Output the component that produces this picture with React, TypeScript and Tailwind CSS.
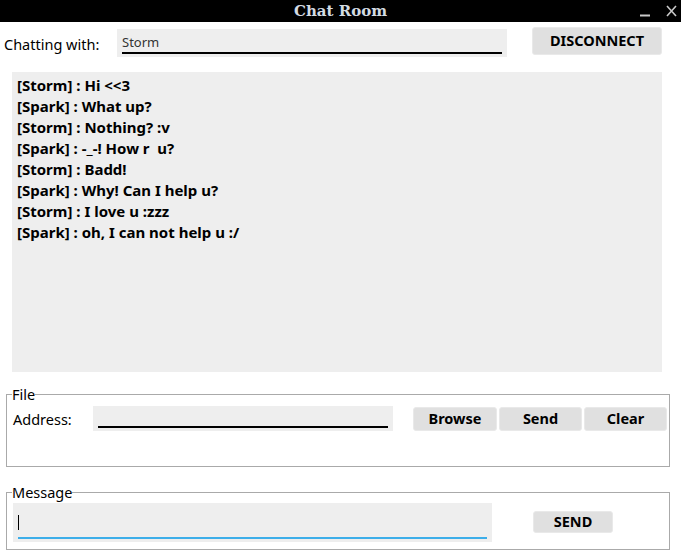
import React from 'react';

const messages = [
  '[Storm] : Hi <<3',
  '[Spark] : What up?',
  '[Storm] : Nothing? :v',
  '[Spark] : -_-! How r  u?',
  '[Storm] : Badd!',
  '[Spark] : Why! Can I help u?',
  '[Storm] : I love u :zzz',
  '[Spark] : oh, I can not help u :/',
];

const font = { fontFamily: '"Noto Sans", "Open Sans", sans-serif' };

function Btn({ label, className }: { label: string; className: string }) {
  return (
    <button
      className={`flex items-center justify-center rounded-[3px] border border-[#e9e9e9] bg-[#e0e0e0] text-[14.5px] font-bold text-black ${className}`}
    >
      {label}
    </button>
  );
}

export default function App() {
  return (
    <div className="w-[681px] h-[557px] bg-white overflow-hidden whitespace-pre" style={font}>
      {/* title bar */}
      <div className="grid h-[22px] grid-cols-[1fr_auto_1fr] items-center bg-black">
        <div />
        <div className="text-[15px] font-bold leading-[22px] text-[#d3dbe3] font-['DejaVu_Serif',serif]">Chat Room</div>
        <div className="flex items-center justify-end gap-[15px] pr-[4px]">
          <svg width="11" height="12" viewBox="0 0 11 12">
            <line x1="0" y1="10.5" x2="10" y2="10.5" stroke="#c9c9c9" strokeWidth="2" />
          </svg>
          <svg width="11" height="12" viewBox="0 0 11 12">
            <path d="M1 1 L10 11 M10 1 L1 11" stroke="#c9c9c9" strokeWidth="1.6" />
          </svg>
        </div>
      </div>

      {/* chatting with */}
      <div className="flex items-start pt-[5px]">
        <div className="w-[117px] pl-[4px] pt-[7px] text-[14.5px] leading-[20px] text-black">Chatting with:</div>
        <div className="mt-[2px] h-[28px] w-[390px] bg-[#eeeeee] px-[5px] pt-[3px]">
          <div className="h-[22px] border-b-[2px] border-black text-[13px] leading-[20px] text-[#333333]">Storm</div>
        </div>
        <Btn label="DISCONNECT" className="ml-[25px] h-[28px] w-[130px]" />
      </div>

      {/* chat log */}
      <div className="mx-[12px] mt-[15px] h-[300px] w-[650px] bg-[#eeeeee] pl-[5px] pt-[3px]">
        {messages.map((m, i) => (
          <div key={i} className="text-[15px] font-bold leading-[21px] text-black">
            {m}
          </div>
        ))}
      </div>

      {/* file */}
      <fieldset className="mx-[6px] mt-[13px] w-[664px] border border-[#aaaaaa] pb-[35px] pl-[5px] pr-[1px]">
        <legend className="text-[14.5px] leading-[18px] text-black">File</legend>
        <div className="mt-[3px] flex items-center">
          <div className="w-[81px] pl-[1px] text-[14.5px] leading-[20px] text-black">Address:</div>
          <div className="h-[25px] w-[300px] bg-[#eeeeee] px-[5px] pt-[3px]">
            <div className="h-[19px] border-b-[2px] border-black" />
          </div>
          <div className="ml-[20px] flex gap-[2px]">
            <Btn label="Browse" className="h-[24px] w-[84px]" />
            <Btn label="Send" className="h-[24px] w-[83px]" />
            <Btn label="Clear" className="h-[24px] w-[83px]" />
          </div>
        </div>
      </fieldset>

      {/* message */}
      <fieldset className="mx-[6px] mt-[16px] w-[664px] border border-[#aaaaaa] pb-[7px] pl-[5px] pr-[1px]">
        <legend className="text-[14.5px] leading-[18px] text-black">Message</legend>
        <div className="mt-[2px] flex items-start">
          <div className="ml-[1px] h-[39px] w-[479px] bg-[#eeeeee] px-[5px] pt-[12px]">
            <div className="h-[24px] border-b-[2px] border-[#3daee9]">
              <div className="h-[15px] w-[1px] bg-black" />
            </div>
          </div>
          <Btn label="SEND" className="ml-[41px] mt-[8px] h-[22px] w-[80px]" />
        </div>
      </fieldset>
    </div>
  );
}
